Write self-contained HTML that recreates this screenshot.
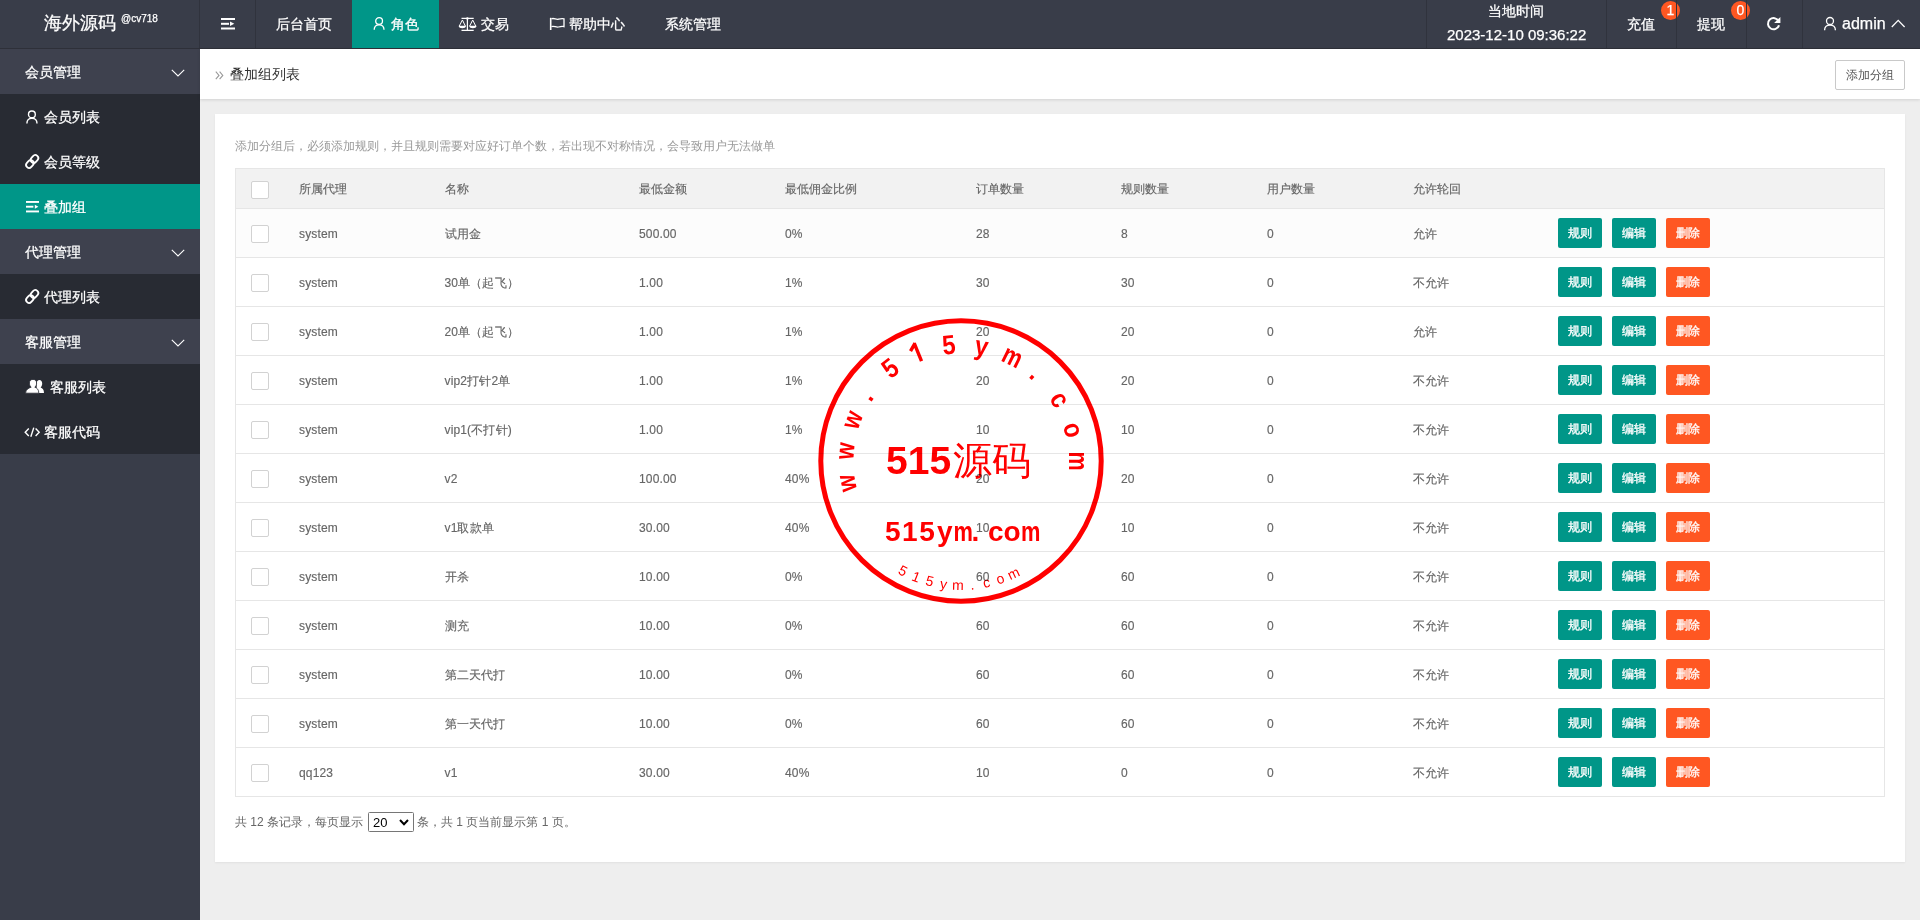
<!DOCTYPE html>
<html><head><meta charset="utf-8">
<style>
*{margin:0;padding:0;box-sizing:border-box}
html,body{width:1920px;height:920px;overflow:hidden}
body{background:#eeeeee;font-family:"Liberation Sans",sans-serif;color:#666;font-size:14px;position:relative}
svg{position:absolute;overflow:visible}
.a{position:absolute;white-space:nowrap}
.hdr{-webkit-text-stroke:0.25px #fff;position:absolute;left:0;top:0;width:1920px;height:49px;background:#393D49;border-bottom:1px solid #2e3039}
.logo .t{left:44px;top:12px;font-size:18px;color:#fff;line-height:22px}
.logo .s{left:121px;top:13px;font-size:10px;color:#fff;line-height:12px}
.sep{position:absolute;top:0;width:1px;height:48px;background:#30333d}
.nav{position:absolute;top:0;height:48px;line-height:48px;color:#fff;font-size:14px;white-space:nowrap}
.on,.c.on{background:#009688}
.side{position:absolute;left:0;top:49px;width:200px;height:871px;background:#393D49}
.p{position:absolute;left:0;width:200px;height:45px;background:#3e414e}
.c{position:absolute;left:0;width:200px;height:45px;background:#282b33}
.side .a{color:#fff;font-size:14px;line-height:45px;top:1px;-webkit-text-stroke:0.25px #fff}
.bar{position:absolute;left:200px;top:49px;width:1720px;height:50px;background:#fff;box-shadow:0 1px 3px rgba(0,0,0,.12)}
.card{position:absolute;left:215px;top:114px;width:1690px;height:748px;background:#fff;box-shadow:0 1px 2px rgba(0,0,0,.06)}
.tbl{position:absolute;width:1650px;height:629px;border:1px solid #e6e6e6}
.th{position:absolute;width:1648px;height:40px;background:#f2f2f2;border-bottom:1px solid #e6e6e6}
.tr{position:absolute;left:236px;width:1648px;height:49px;border-bottom:1px solid #e6e6e6;background:#fff}
.tr.r1{background:#fcfcfc}
.cb{position:absolute;width:18px;height:18px;border:1px solid #d2d2d2;border-radius:2px;background:#fff}
.tx{position:absolute;font-size:12px;line-height:50px;color:#666;white-space:nowrap;letter-spacing:0.15px;-webkit-text-stroke:0.15px #666}
.tx.hd{line-height:40px;color:#666;letter-spacing:0}
.btn{position:absolute;width:44px;height:30px;line-height:31px;text-align:center;color:#fff;font-size:12px;border-radius:2px;-webkit-text-stroke:0.3px #fff}
.btn.g{background:#009688}
.btn.d{background:#FF5722}
.stamp{left:0;top:0;mix-blend-mode:multiply;pointer-events:none}
.st1{font-family:"Liberation Sans",sans-serif;font-size:27px;font-weight:bold;fill:#f00;text-anchor:middle}
.st2{font-family:"Liberation Sans",sans-serif;font-size:14px;fill:#f00;text-anchor:middle}
.st3{font-family:"Liberation Sans",sans-serif;font-size:39px;font-weight:bold;fill:#f00}
.st4{font-family:"Liberation Sans",sans-serif;font-size:28px;font-weight:bold;fill:#f00}
.badge{position:absolute;width:19px;height:19px;border-radius:50%;background:#FF5722;color:#fff;font-size:14px;line-height:19px;text-align:center}
</style></head><body>
<div class="hdr">
  <div class="logo"><span class="a t">海外源码</span><span class="a s">@cv718</span></div>
  <div class="sep" style="left:199px"></div>
  <svg style="left:221px;top:18px" width="14" height="12" viewBox="0 0 14 12"><rect x="0" y="0" width="14" height="2" fill="#fff"/><rect x="0" y="4.8" width="8" height="2" fill="#fff"/><path d="M9 3.6 L13.3 5.8 L9 8 Z" fill="#fff"/><rect x="0" y="9.5" width="14" height="2" fill="#fff"/></svg>
  <div class="sep" style="left:255px"></div>
  <div class="nav" style="left:276px">后台首页</div>
  <div class="nav on" style="left:352px;width:87px"></div>
  <svg style="left:373px;top:16px" width="13" height="14" viewBox="0 0 13 14"><circle cx="6.1" cy="5" r="3.4" fill="none" stroke="#fff" stroke-width="1.3"/><path d="M1.2 13.8 C1.2 10.5 3.4 8.8 6.1 8.8 C8.8 8.8 11 10.5 11 13.8" fill="none" stroke="#fff" stroke-width="1.3"/></svg>
  <div class="nav" style="left:391px">角色</div>
  <svg style="left:458px;top:17px" width="19" height="14" viewBox="0 0 19 14"><path d="M3.5 1.4 H15.7 M9.4 1 V13.4 M3.5 13.4 H15.7" stroke="#fff" stroke-width="1.2" fill="none"/><path d="M4.4 3 L1.2 9.2 M4.4 3 L7.4 9.2 M14.7 3 L11.6 9.2 M14.7 3 L17.8 9.2" stroke="#fff" stroke-width="1" fill="none"/><path d="M0.7 8.8 H8 C7.8 10.6 6.4 11.2 4.35 11.2 C2.3 11.2 0.9 10.6 0.7 8.8Z M11.3 8.8 H18.5 C18.3 10.6 16.9 11.2 14.9 11.2 C12.8 11.2 11.5 10.6 11.3 8.8Z" fill="#fff"/><circle cx="9.4" cy="1.4" r="1.2" fill="#fff"/></svg>
  <div class="nav" style="left:481px">交易</div>
  <svg style="left:549px;top:17px" width="16" height="14" viewBox="0 0 16 14"><path d="M1.7 0.8 V13" stroke="#fff" stroke-width="1.6" fill="none"/><path d="M2.5 1.8 C5 0.6 7 3 9.5 2.2 C11.5 1.6 13 1.2 15 1.8 V9.6 C13 9 11.5 9.4 9.5 10 C7 10.8 5 8.4 2.5 9.6" stroke="#fff" stroke-width="1.3" fill="none"/></svg>
  <div class="nav" style="left:569px">帮助中心</div>
  <div class="nav" style="left:665px">系统管理</div>

  <div class="sep" style="left:1426px"></div>
  <div class="a" style="left:1488px;top:3px;font-size:14px;line-height:16px;color:#fff">当地时间</div>
  <div class="a" style="left:1447px;top:26px;font-size:15px;line-height:17px;color:#fff">2023-12-10 09:36:22</div>
  <div class="sep" style="left:1606px"></div>
  <div class="a" style="left:1627px;top:16px;font-size:14px;line-height:16px;color:#fff">充值</div>
  <div class="badge" style="left:1661px;top:1px">1</div>
  <div class="sep" style="left:1676px"></div>
  <div class="a" style="left:1697px;top:16px;font-size:14px;line-height:16px;color:#fff">提现</div>
  <div class="badge" style="left:1731px;top:1px">0</div>
  <div class="sep" style="left:1746px"></div>
  <svg style="left:1766px;top:16px" width="15" height="15" viewBox="0 0 15 15"><path d="M12.6 5.2 A5.6 5.6 0 1 0 13 9.2" fill="none" stroke="#fff" stroke-width="2"/><path d="M8.1 7 L14.4 7 L14.4 0.9 Z" fill="#fff"/></svg>
  <div class="sep" style="left:1802px"></div>
  <svg style="left:1823px;top:16px" width="14" height="15" viewBox="0 0 14 15"><circle cx="7" cy="5" r="3.5" fill="none" stroke="#fff" stroke-width="1.3"/><path d="M1.6 14.2 C1.6 10.8 3.9 9.2 7 9.2 C10.1 9.2 12.4 10.8 12.4 14.2" fill="none" stroke="#fff" stroke-width="1.3"/></svg>
  <div class="a" style="left:1842px;top:15px;font-size:16px;line-height:18px;color:#fff">admin</div>
  <svg style="left:1891px;top:19px" width="15" height="9" viewBox="0 0 15 9"><path d="M0.8 8 L7.2 1.4 L13.6 8" fill="none" stroke="#fff" stroke-width="1.3"/></svg>
</div>

<div class="side">
  <div class="p" style="top:0"><span class="a" style="left:25px">会员管理</span><svg style="left:171px;top:20px" width="15" height="8" viewBox="0 0 15 8"><path d="M0.8 0.8 L7 6.9 L13.2 0.8" fill="none" stroke="#fff" stroke-width="1.1"/></svg></div>
  <div class="c" style="top:45px"><svg style="left:26px;top:16px" width="13" height="14" viewBox="0 0 13 14"><circle cx="5.9" cy="4.4" r="3.4" fill="none" stroke="#fff" stroke-width="1.4"/><path d="M0.9 13.4 C0.9 10.2 3 8.4 5.9 8.4 C8.8 8.4 11 10.2 11 13.4" fill="none" stroke="#fff" stroke-width="1.4"/></svg><span class="a" style="left:44px">会员列表</span></div>
  <div class="c" style="top:90px"><svg style="left:24px;top:15px" width="16" height="16" viewBox="0 0 16 16"><g fill="none" stroke="#fff" stroke-width="1.8" transform="translate(8.2 7.5) rotate(-48)"><rect x="-0.8" y="-3" width="8.4" height="6" rx="3"/><rect x="-7.6" y="-3" width="8.4" height="6" rx="3"/></g></svg><span class="a" style="left:44px">会员等级</span></div>
  <div class="c on" style="top:135px"><svg style="left:26px;top:17px" width="13" height="12" viewBox="0 0 13 12"><rect x="0" y="0" width="13" height="1.9" fill="#fff"/><rect x="0" y="4.75" width="7.4" height="1.9" fill="#fff"/><path d="M8.8 3.7 L12.4 5.7 L8.8 7.7 Z" fill="#fff"/><rect x="0" y="9.5" width="13" height="1.9" fill="#fff"/></svg><span class="a" style="left:44px">叠加组</span></div>
  <div class="p" style="top:180px"><span class="a" style="left:25px">代理管理</span><svg style="left:171px;top:20px" width="15" height="8" viewBox="0 0 15 8"><path d="M0.8 0.8 L7 6.9 L13.2 0.8" fill="none" stroke="#fff" stroke-width="1.1"/></svg></div>
  <div class="c" style="top:225px"><svg style="left:24px;top:15px" width="16" height="16" viewBox="0 0 16 16"><g fill="none" stroke="#fff" stroke-width="1.8" transform="translate(8.2 7.5) rotate(-48)"><rect x="-0.8" y="-3" width="8.4" height="6" rx="3"/><rect x="-7.6" y="-3" width="8.4" height="6" rx="3"/></g></svg><span class="a" style="left:44px">代理列表</span></div>
  <div class="p" style="top:270px"><span class="a" style="left:25px">客服管理</span><svg style="left:171px;top:20px" width="15" height="8" viewBox="0 0 15 8"><path d="M0.8 0.8 L7 6.9 L13.2 0.8" fill="none" stroke="#fff" stroke-width="1.1"/></svg></div>
  <div class="c" style="top:315px"><svg style="left:25px;top:15px" width="20" height="15" viewBox="0 0 20 15"><path d="M11.5 14 H19 C19 10.5 17.6 9.2 15.6 8.4 C16.6 7.5 17.2 6.2 17.2 4.5 C17.2 2.2 16 0.9 14.4 0.9 C13 0.9 12 1.9 11.8 3.5 Z" fill="#fff"/><path d="M0.6 14.2 H13.8 C13.8 10.4 12 9 9.8 8.2 C11 7.2 11.6 5.8 11.6 4 C11.6 1.8 10.2 0.4 8 0.4 C5.8 0.4 4.4 1.8 4.4 4 C4.4 5.8 5 7.2 6.2 8.2 C3.8 9 0.6 10.4 0.6 14.2 Z" fill="#fff" stroke="#282b33" stroke-width="0.8"/></svg><span class="a" style="left:50px">客服列表</span></div>
  <div class="c" style="top:360px"><svg style="left:24px;top:18px" width="17" height="11" viewBox="0 0 17 11"><path d="M4.8 1.4 L1.2 5.2 L4.8 9 M11.6 1.4 L15.2 5.2 L11.6 9" fill="none" stroke="#fff" stroke-width="1.4"/><path d="M9.8 0.6 L6.8 9.8" fill="none" stroke="#fff" stroke-width="1.4"/></svg><span class="a" style="left:44px">客服代码</span></div>
</div>

<div class="bar">
  <svg style="left:15px;top:22px" width="10" height="9" viewBox="0 0 10 9"><path d="M0.8 0.6 L4 4.4 L0.8 8.2 M4.6 0.6 L7.8 4.4 L4.6 8.2" fill="none" stroke="#999" stroke-width="1.1"/></svg>
  <span class="a" style="left:30px;top:16px;font-size:14px;line-height:18px;color:#333">叠加组列表</span>
  <div class="a" style="left:1635px;top:11px;width:70px;height:30px;border:1px solid #c9c9c9;border-radius:2px;background:#fff;color:#555;font-size:12px;line-height:28px;text-align:center">添加分组</div>
</div>

<div class="card"></div>
<div class="a" style="left:235px;top:138px;font-size:12px;line-height:16px;color:#999">添加分组后，必须添加规则，并且规则需要对应好订单个数，若出现不对称情况，会导致用户无法做单</div>
<div class="th" style="left:236px;top:169px"></div>
<div class="cb" style="left:251px;top:181px"></div>
<div class="tx hd" style="left:299px;top:169px">所属代理</div>
<div class="tx hd" style="left:444.5px;top:169px">名称</div>
<div class="tx hd" style="left:639px;top:169px">最低金额</div>
<div class="tx hd" style="left:785px;top:169px">最低佣金比例</div>
<div class="tx hd" style="left:976px;top:169px">订单数量</div>
<div class="tx hd" style="left:1121px;top:169px">规则数量</div>
<div class="tx hd" style="left:1267px;top:169px">用户数量</div>
<div class="tx hd" style="left:1413px;top:169px">允许轮回</div>
<div class="tr r1" style="top:209px"></div>
<div class="cb" style="left:251px;top:225px"></div>
<div class="tx" style="left:299px;top:209px">system</div>
<div class="tx" style="left:444.5px;top:209px">试用金</div>
<div class="tx" style="left:639px;top:209px">500.00</div>
<div class="tx" style="left:785px;top:209px">0%</div>
<div class="tx" style="left:976px;top:209px">28</div>
<div class="tx" style="left:1121px;top:209px">8</div>
<div class="tx" style="left:1267px;top:209px">0</div>
<div class="tx" style="left:1413px;top:209px">允许</div>
<div class="btn g" style="left:1558px;top:218px">规则</div>
<div class="btn g" style="left:1612px;top:218px">编辑</div>
<div class="btn d" style="left:1666px;top:218px">删除</div>
<div class="tr" style="top:258px"></div>
<div class="cb" style="left:251px;top:274px"></div>
<div class="tx" style="left:299px;top:258px">system</div>
<div class="tx" style="left:444.5px;top:258px">30单（起飞）</div>
<div class="tx" style="left:639px;top:258px">1.00</div>
<div class="tx" style="left:785px;top:258px">1%</div>
<div class="tx" style="left:976px;top:258px">30</div>
<div class="tx" style="left:1121px;top:258px">30</div>
<div class="tx" style="left:1267px;top:258px">0</div>
<div class="tx" style="left:1413px;top:258px">不允许</div>
<div class="btn g" style="left:1558px;top:267px">规则</div>
<div class="btn g" style="left:1612px;top:267px">编辑</div>
<div class="btn d" style="left:1666px;top:267px">删除</div>
<div class="tr" style="top:307px"></div>
<div class="cb" style="left:251px;top:323px"></div>
<div class="tx" style="left:299px;top:307px">system</div>
<div class="tx" style="left:444.5px;top:307px">20单（起飞）</div>
<div class="tx" style="left:639px;top:307px">1.00</div>
<div class="tx" style="left:785px;top:307px">1%</div>
<div class="tx" style="left:976px;top:307px">20</div>
<div class="tx" style="left:1121px;top:307px">20</div>
<div class="tx" style="left:1267px;top:307px">0</div>
<div class="tx" style="left:1413px;top:307px">允许</div>
<div class="btn g" style="left:1558px;top:316px">规则</div>
<div class="btn g" style="left:1612px;top:316px">编辑</div>
<div class="btn d" style="left:1666px;top:316px">删除</div>
<div class="tr" style="top:356px"></div>
<div class="cb" style="left:251px;top:372px"></div>
<div class="tx" style="left:299px;top:356px">system</div>
<div class="tx" style="left:444.5px;top:356px">vip2打针2单</div>
<div class="tx" style="left:639px;top:356px">1.00</div>
<div class="tx" style="left:785px;top:356px">1%</div>
<div class="tx" style="left:976px;top:356px">20</div>
<div class="tx" style="left:1121px;top:356px">20</div>
<div class="tx" style="left:1267px;top:356px">0</div>
<div class="tx" style="left:1413px;top:356px">不允许</div>
<div class="btn g" style="left:1558px;top:365px">规则</div>
<div class="btn g" style="left:1612px;top:365px">编辑</div>
<div class="btn d" style="left:1666px;top:365px">删除</div>
<div class="tr" style="top:405px"></div>
<div class="cb" style="left:251px;top:421px"></div>
<div class="tx" style="left:299px;top:405px">system</div>
<div class="tx" style="left:444.5px;top:405px">vip1(不打针)</div>
<div class="tx" style="left:639px;top:405px">1.00</div>
<div class="tx" style="left:785px;top:405px">1%</div>
<div class="tx" style="left:976px;top:405px">10</div>
<div class="tx" style="left:1121px;top:405px">10</div>
<div class="tx" style="left:1267px;top:405px">0</div>
<div class="tx" style="left:1413px;top:405px">不允许</div>
<div class="btn g" style="left:1558px;top:414px">规则</div>
<div class="btn g" style="left:1612px;top:414px">编辑</div>
<div class="btn d" style="left:1666px;top:414px">删除</div>
<div class="tr" style="top:454px"></div>
<div class="cb" style="left:251px;top:470px"></div>
<div class="tx" style="left:299px;top:454px">system</div>
<div class="tx" style="left:444.5px;top:454px">v2</div>
<div class="tx" style="left:639px;top:454px">100.00</div>
<div class="tx" style="left:785px;top:454px">40%</div>
<div class="tx" style="left:976px;top:454px">20</div>
<div class="tx" style="left:1121px;top:454px">20</div>
<div class="tx" style="left:1267px;top:454px">0</div>
<div class="tx" style="left:1413px;top:454px">不允许</div>
<div class="btn g" style="left:1558px;top:463px">规则</div>
<div class="btn g" style="left:1612px;top:463px">编辑</div>
<div class="btn d" style="left:1666px;top:463px">删除</div>
<div class="tr" style="top:503px"></div>
<div class="cb" style="left:251px;top:519px"></div>
<div class="tx" style="left:299px;top:503px">system</div>
<div class="tx" style="left:444.5px;top:503px">v1取款单</div>
<div class="tx" style="left:639px;top:503px">30.00</div>
<div class="tx" style="left:785px;top:503px">40%</div>
<div class="tx" style="left:976px;top:503px">10</div>
<div class="tx" style="left:1121px;top:503px">10</div>
<div class="tx" style="left:1267px;top:503px">0</div>
<div class="tx" style="left:1413px;top:503px">不允许</div>
<div class="btn g" style="left:1558px;top:512px">规则</div>
<div class="btn g" style="left:1612px;top:512px">编辑</div>
<div class="btn d" style="left:1666px;top:512px">删除</div>
<div class="tr" style="top:552px"></div>
<div class="cb" style="left:251px;top:568px"></div>
<div class="tx" style="left:299px;top:552px">system</div>
<div class="tx" style="left:444.5px;top:552px">开杀</div>
<div class="tx" style="left:639px;top:552px">10.00</div>
<div class="tx" style="left:785px;top:552px">0%</div>
<div class="tx" style="left:976px;top:552px">60</div>
<div class="tx" style="left:1121px;top:552px">60</div>
<div class="tx" style="left:1267px;top:552px">0</div>
<div class="tx" style="left:1413px;top:552px">不允许</div>
<div class="btn g" style="left:1558px;top:561px">规则</div>
<div class="btn g" style="left:1612px;top:561px">编辑</div>
<div class="btn d" style="left:1666px;top:561px">删除</div>
<div class="tr" style="top:601px"></div>
<div class="cb" style="left:251px;top:617px"></div>
<div class="tx" style="left:299px;top:601px">system</div>
<div class="tx" style="left:444.5px;top:601px">测充</div>
<div class="tx" style="left:639px;top:601px">10.00</div>
<div class="tx" style="left:785px;top:601px">0%</div>
<div class="tx" style="left:976px;top:601px">60</div>
<div class="tx" style="left:1121px;top:601px">60</div>
<div class="tx" style="left:1267px;top:601px">0</div>
<div class="tx" style="left:1413px;top:601px">不允许</div>
<div class="btn g" style="left:1558px;top:610px">规则</div>
<div class="btn g" style="left:1612px;top:610px">编辑</div>
<div class="btn d" style="left:1666px;top:610px">删除</div>
<div class="tr" style="top:650px"></div>
<div class="cb" style="left:251px;top:666px"></div>
<div class="tx" style="left:299px;top:650px">system</div>
<div class="tx" style="left:444.5px;top:650px">第二天代打</div>
<div class="tx" style="left:639px;top:650px">10.00</div>
<div class="tx" style="left:785px;top:650px">0%</div>
<div class="tx" style="left:976px;top:650px">60</div>
<div class="tx" style="left:1121px;top:650px">60</div>
<div class="tx" style="left:1267px;top:650px">0</div>
<div class="tx" style="left:1413px;top:650px">不允许</div>
<div class="btn g" style="left:1558px;top:659px">规则</div>
<div class="btn g" style="left:1612px;top:659px">编辑</div>
<div class="btn d" style="left:1666px;top:659px">删除</div>
<div class="tr" style="top:699px"></div>
<div class="cb" style="left:251px;top:715px"></div>
<div class="tx" style="left:299px;top:699px">system</div>
<div class="tx" style="left:444.5px;top:699px">第一天代打</div>
<div class="tx" style="left:639px;top:699px">10.00</div>
<div class="tx" style="left:785px;top:699px">0%</div>
<div class="tx" style="left:976px;top:699px">60</div>
<div class="tx" style="left:1121px;top:699px">60</div>
<div class="tx" style="left:1267px;top:699px">0</div>
<div class="tx" style="left:1413px;top:699px">不允许</div>
<div class="btn g" style="left:1558px;top:708px">规则</div>
<div class="btn g" style="left:1612px;top:708px">编辑</div>
<div class="btn d" style="left:1666px;top:708px">删除</div>
<div class="tr" style="top:748px;border-bottom:0;height:48px"></div>
<div class="cb" style="left:251px;top:764px"></div>
<div class="tx" style="left:299px;top:748px">qq123</div>
<div class="tx" style="left:444.5px;top:748px">v1</div>
<div class="tx" style="left:639px;top:748px">30.00</div>
<div class="tx" style="left:785px;top:748px">40%</div>
<div class="tx" style="left:976px;top:748px">10</div>
<div class="tx" style="left:1121px;top:748px">0</div>
<div class="tx" style="left:1267px;top:748px">0</div>
<div class="tx" style="left:1413px;top:748px">不允许</div>
<div class="btn g" style="left:1558px;top:757px">规则</div>
<div class="btn g" style="left:1612px;top:757px">编辑</div>
<div class="btn d" style="left:1666px;top:757px">删除</div>
<div class="tbl" style="left:235px;top:168px"></div>
<div class="a" style="left:235px;top:814px;font-size:12px;line-height:16px;color:#666">共 12 条记录，每页显示</div>
<div class="a" style="left:368px;top:812px;width:46px;height:20px;border:1px solid #767676;border-radius:1.5px;background:#fff;color:#000;font-size:13px;line-height:19px;padding-left:4px">20<svg style="left:30px;top:6px" width="10" height="7" viewBox="0 0 10 7"><path d="M1 1 L5 5.2 L9 1" fill="none" stroke="#000" stroke-width="2"/></svg></div>
<div class="a" style="left:417px;top:814px;font-size:12px;line-height:16px;color:#666">条，共 1 页当前显示第 1 页。</div>
<svg class="stamp" width="1920" height="920" viewBox="0 0 1920 920">
<circle cx="961" cy="461" r="140.2" fill="none" stroke="#f00" stroke-width="5"/>
<text x="0" y="0" transform="translate(855.5 481.5) rotate(259.0) scale(0.8 1)" class="st1">w</text>
<text x="0" y="0" transform="translate(853.9 451.6) rotate(275.0) scale(0.8 1)" class="st1">w</text>
<text x="0" y="0" transform="translate(860.4 423.0) rotate(290.7) scale(0.8 1)" class="st1">w</text>
<text x="0" y="0" transform="translate(872.5 400.0) rotate(304.6) scale(0.88 1)" class="st1">.</text>
<text x="0" y="0" transform="translate(895.7 375.6) rotate(322.6) scale(0.88 1)" class="st1">5</text>
<path d="M1.2 0 V-19.4 M2 -19 L-5.2 -13.4" stroke="#f00" stroke-width="3.4" fill="none" transform="translate(920.4 361.5) rotate(337.8)"/>
<text x="0" y="0" transform="translate(949.8 354.1) rotate(354.0) scale(0.88 1)" class="st1">5</text>
<text x="0" y="0" transform="translate(980.0 355.2) rotate(370.2) scale(0.88 1)" class="st1">y</text>
<text x="0" y="0" transform="translate(1008.6 364.6) rotate(386.3) scale(0.8 1)" class="st1">m</text>
<text x="0" y="0" transform="translate(1030.4 378.9) rotate(400.2) scale(0.88 1)" class="st1">.</text>
<text x="0" y="0" transform="translate(1052.3 404.2) rotate(418.1) scale(0.88 1)" class="st1">c</text>
<text x="0" y="0" transform="translate(1064.6 432.3) rotate(434.5) scale(0.88 1)" class="st1">o</text>
<text x="0" y="0" transform="translate(1068.5 461.0) rotate(450.0) scale(0.8 1)" class="st1">m</text>
<text x="900.8" y="575.1" transform="rotate(27.8 900.8 575.1)" class="st2">5</text>
<text x="914.4" y="581.3" transform="rotate(21.2 914.4 581.3)" class="st2">1</text>
<text x="928.5" y="585.8" transform="rotate(14.6 928.5 585.8)" class="st2">5</text>
<text x="943.0" y="588.7" transform="rotate(8.0 943.0 588.7)" class="st2">y</text>
<text x="957.8" y="590.0" transform="rotate(1.4 957.8 590.0)" class="st2">m</text>
<text x="972.7" y="589.5" transform="rotate(-5.2 972.7 589.5)" class="st2">.</text>
<text x="987.4" y="587.3" transform="rotate(-11.8 987.4 587.3)" class="st2">c</text>
<text x="1001.7" y="583.4" transform="rotate(-18.4 1001.7 583.4)" class="st2">o</text>
<text x="1015.5" y="577.9" transform="rotate(-25.0 1015.5 577.9)" class="st2">m</text>
<text x="886" y="474" class="st3">515<tspan font-weight="normal" dx="2">源码</tspan></text>
<text x="0" y="0" transform="translate(885 541) scale(1 1)" class="st4">5</text>
<text x="0" y="0" transform="translate(902 541) scale(1 1)" class="st4">1</text>
<text x="0" y="0" transform="translate(919.2 541) scale(1 1)" class="st4">5</text>
<text x="0" y="0" transform="translate(937 541) scale(1 1)" class="st4">y</text>
<text x="0" y="0" transform="translate(953.5 541) scale(0.78 1)" class="st4">m</text>
<text x="0" y="0" transform="translate(971.5 541) scale(1 1)" class="st4">.</text>
<text x="0" y="0" transform="translate(988 541) scale(1 1)" class="st4">c</text>
<text x="0" y="0" transform="translate(1003.5 541) scale(1 1)" class="st4">o</text>
<text x="0" y="0" transform="translate(1021 541) scale(0.78 1)" class="st4">m</text>
</svg>
</body></html>
